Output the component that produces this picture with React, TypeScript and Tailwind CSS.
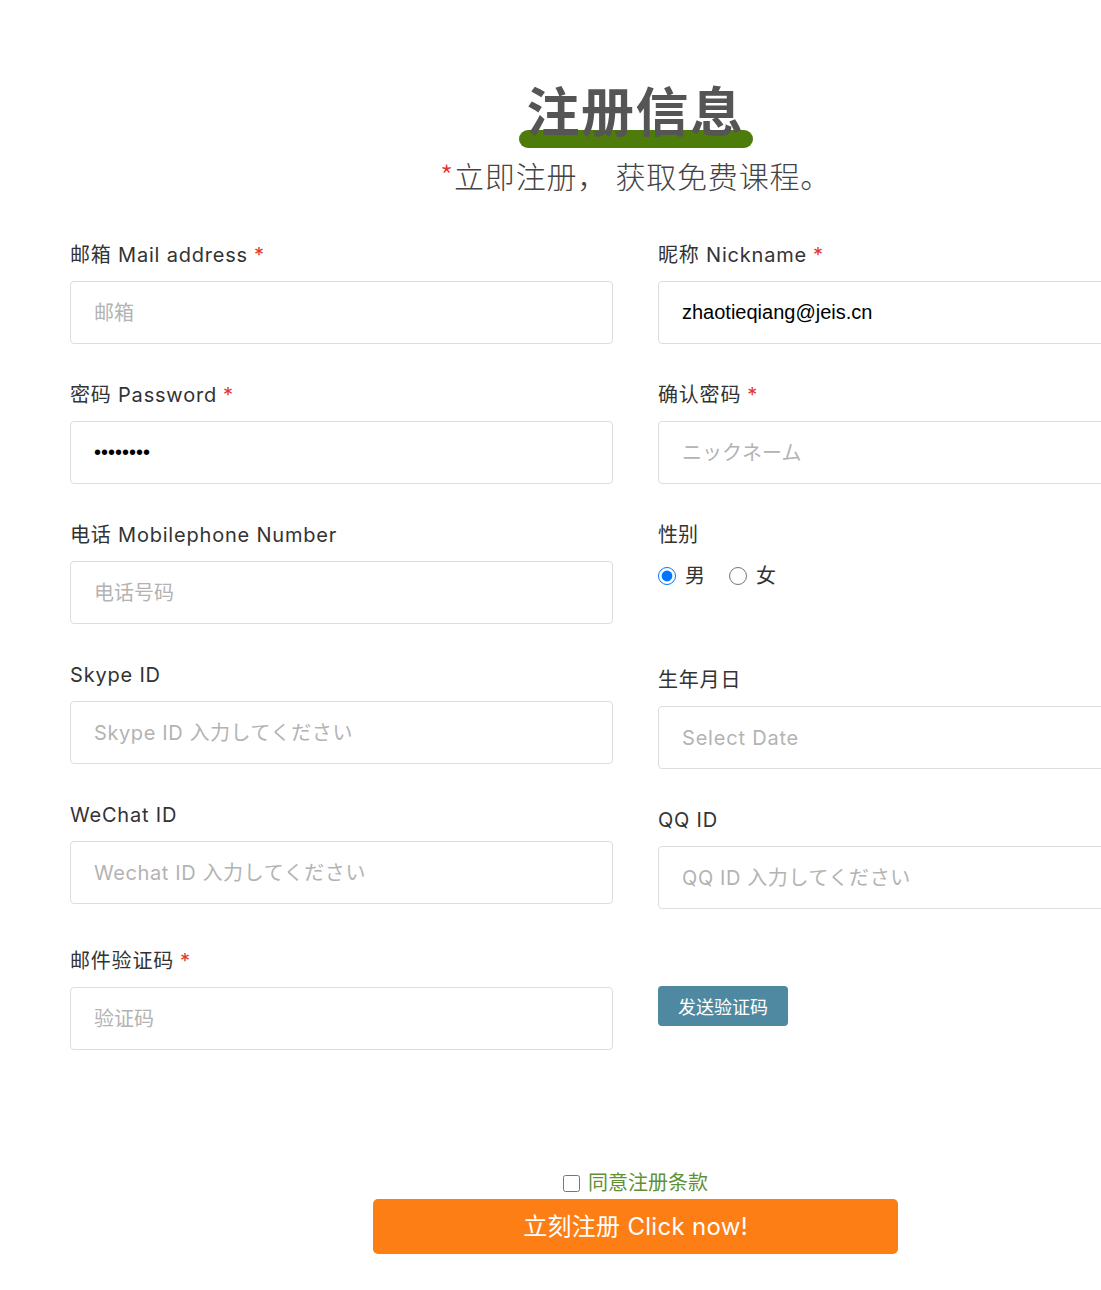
import React from 'react';

const latin = "font-['Inter','Noto_Sans_CJK_SC',sans-serif]";

interface FieldProps {
  label: React.ReactNode;
  required?: boolean;
  placeholder?: string;
  value?: string;
  type?: string;
  valueFont?: string;
  className?: string;
}

const Field: React.FC<FieldProps> = ({ label, required, placeholder, value, type = 'text', valueFont = '', className = '' }) => (
  <div className={`mb-[36px] ${className}`}>
    <label className="block text-[20px] leading-[30px] tracking-[0.8px] text-[#333] mb-[11px]">
      {label}
      {required && <span className="text-[#e3342f] ml-[6px]">*</span>}
    </label>
    <input
      type={type}
      readOnly
      defaultValue={value}
      placeholder={placeholder}
      className={`block w-full h-[63px] border border-[#ddd] rounded-[4px] px-[23px] text-[20px] text-black placeholder:text-[#b3b3b3] outline-none ${valueFont}`}
    />
  </div>
);

export default function App() {
  return (
    <div className={`w-full overflow-hidden bg-white min-h-[1290px] ${latin}`}>
      <div className="w-[1131px] ml-[70px] pt-[79px]">
        <div className="flex flex-col items-center">
          <div className="relative inline-block px-[8px]">
            <span className="absolute left-0 right-0 bottom-[-9px] h-[18px] rounded-full bg-[#4e7c0b]"></span>
            <h1 className="relative text-[53px] leading-[60px] font-bold tracking-[1.5px] text-[#555] font-['Noto_Sans_CJK_SC',sans-serif]">注册信息</h1>
          </div>
          <p className="mt-[16px] text-[30px] leading-[40px] font-light tracking-[0.8px] text-[#444] font-['Noto_Sans_CJK_SC',sans-serif]">
            <span className="text-[#e3342f]">*</span>立即注册，&nbsp;获取免费课程。
          </p>
        </div>

        <div className="grid grid-cols-2 gap-x-[45px] mt-[45px]">
          <div className="flex flex-col">
            <Field label="邮箱 Mail address" required placeholder="邮箱" />
            <Field label="密码 Password" required type="password" value="12345678" valueFont="font-['Liberation_Sans',sans-serif]" />
            <Field label="电话 Mobilephone Number" placeholder="电话号码" />
            <Field label="Skype ID" placeholder="Skype ID 入力してください" valueFont="placeholder:tracking-[0.6px]" />
            <Field label="WeChat ID" placeholder="Wechat ID 入力してください" valueFont="placeholder:tracking-[0.6px]" />
            <Field label="邮件验证码" required placeholder="验证码" className="mt-[6px]" />
          </div>
          <div className="flex flex-col">
            <Field label="昵称 Nickname" required value="zhaotieqiang@jeis.cn" valueFont="font-['Liberation_Sans',sans-serif]" />
            <Field label="确认密码" required placeholder="ニックネーム" />
            <div className="mb-[74px]">
              <div className="text-[20px] leading-[30px] text-[#333] mb-[11px]">性别</div>
              <div className="flex items-center h-[30px] text-[20px] text-[#333]">
                <label className="flex items-center mr-[24px]">
                  <input type="radio" name="sex" defaultChecked className="w-[18px] h-[18px] m-0 mr-[9px] accent-[#0075ff]" />
                  男
                </label>
                <label className="flex items-center">
                  <input type="radio" name="sex" className="w-[18px] h-[18px] m-0 mr-[9px]" />
                  女
                </label>
              </div>
            </div>
            <Field label="生年月日" placeholder="Select Date" valueFont="placeholder:tracking-[0.8px]" />
            <Field label="QQ ID" placeholder="QQ ID 入力してください" valueFont="placeholder:tracking-[0.6px]" />
            <div className="mt-[41px]">
              <button className="h-[40px] px-[20px] rounded-[4px] bg-[#4f88a1] text-white text-[18px] font-['Noto_Sans_CJK_SC',sans-serif]">
                发送验证码
              </button>
            </div>
          </div>
        </div>

        <div className="flex flex-col items-center mt-[83px]">
          <label className="flex items-center text-[20px] leading-[28px] text-[#5f9134]">
            <input type="checkbox" className="w-[17px] h-[17px] m-0 mr-[8px]" />
            同意注册条款
          </label>
          <button className="mt-[2px] w-[525px] h-[55px] rounded-[5px] bg-[#fd7e14] text-white text-[24px] tracking-[0.3px]">
            立刻注册 Click now!
          </button>
        </div>
      </div>
    </div>
  );
}
